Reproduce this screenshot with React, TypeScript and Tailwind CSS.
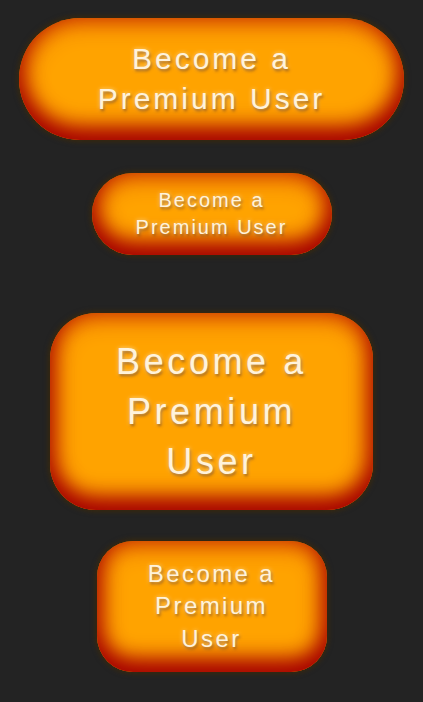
const buttonShadow =
  "shadow-[0_0_5px_2px_rgba(70,45,0,0.6),inset_0_-12px_22px_rgba(165,0,0,1),inset_0_0_22px_5px_rgba(205,55,0,0.9)]";

const textGlow =
  "[text-shadow:0_0_4px_rgba(255,235,190,0.8),1px_2px_3px_rgba(90,35,0,0.7)]";

function PremiumButton({ cls, lines }: { cls: string; lines: string[] }) {
  return (
    <button
      className={`flex flex-col items-center justify-center bg-[#ffa300] text-[#fff3dc] tracking-[0.1em] ${textGlow} ${buttonShadow} ${cls}`}
      style={{ fontFamily: '"Liberation Sans", Arial, sans-serif' }}
    >
      {lines.map((l) => (
        <span key={l}>{l}</span>
      ))}
    </button>
  );
}

export default function App() {
  return (
    <div className="min-h-screen w-full bg-[#232323] flex flex-col items-center pt-[18px]">
      <PremiumButton
        cls="w-[385px] h-[122px] rounded-full text-[30px] leading-[40px]"
        lines={["Become a", "Premium User"]}
      />
      <PremiumButton
        cls="mt-[33px] w-[240px] h-[82px] rounded-full text-[20px] leading-[27px]"
        lines={["Become a", "Premium User"]}
      />
      <PremiumButton
        cls="mt-[58px] w-[323px] h-[197px] rounded-[46px] text-[36px] leading-[50px]"
        lines={["Become a", "Premium", "User"]}
      />
      <PremiumButton
        cls="mt-[31px] w-[230px] h-[131px] rounded-[36px] text-[24px] leading-[32.5px]"
        lines={["Become a", "Premium", "User"]}
      />
    </div>
  );
}
